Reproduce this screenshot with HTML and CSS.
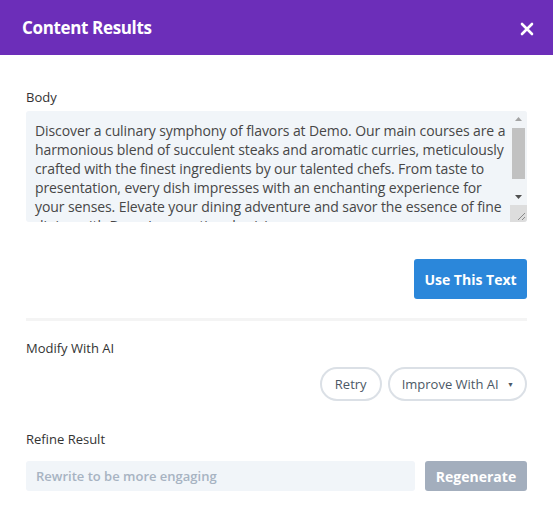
FILE: index.html
```html
<!DOCTYPE html>
<html lang="en">
<head>
  <meta charset="UTF-8">
  <meta name="viewport" content="width=device-width, initial-scale=1.0">
  <title>Content Results</title>
  <link rel="stylesheet" href="styles.css">
</head>
<body>

  <div class="modal">
    <header class="modal-header">
      <h2>Content Results</h2>
      <span class="close">
        <svg width="14" height="14" viewBox="0 0 14 14"><path d="M2 2L12 12M12 2L2 12" stroke="#fff" stroke-width="2.6" stroke-linecap="round"/></svg>
      </span>
    </header>

    <div class="modal-body">
      <!-- Result -->
      <label class="field-label">Body</label>
      <div class="text-wrap">
        <textarea class="result-text">Discover a culinary symphony of flavors at Demo. Our main courses are a harmonious blend of succulent steaks and aromatic curries, meticulously crafted with the finest ingredients by our talented chefs. From taste to presentation, every dish impresses with an enchanting experience for your senses. Elevate your dining adventure and savor the essence of fine dining with Demo's exceptional cuisine.</textarea>
        <!-- scrollbar drawn by hand, headless hides the native one -->
        <div class="scrollbar">
          <div class="sb-btn">
            <svg width="7" height="4" viewBox="0 0 7 4"><path d="M0 4L3.5 0L7 4Z" fill="#a3a3a3"/></svg>
          </div>
          <div class="sb-track"><div class="sb-thumb"></div></div>
          <div class="sb-btn">
            <svg width="7" height="4" viewBox="0 0 7 4"><path d="M0 0L3.5 4L7 0Z" fill="#505050"/></svg>
          </div>
          <div class="sb-corner">
            <svg width="17" height="17" viewBox="0 0 17 17"><path d="M15 8L8 15M15 12L12 15" stroke="#8a8a8a" stroke-width="1"/></svg>
          </div>
        </div>
      </div>

      <div class="actions">
        <button class="btn-primary">Use This Text</button>
      </div>

      <div class="divider"></div>

      <!-- Modify -->
      <label class="field-label modify-label">Modify With AI</label>
      <div class="pill-row">
        <button class="pill pill-retry">Retry</button>
        <button class="pill">Improve With AI <span class="caret">&#9660;</span></button>
      </div>

      <!-- Refine -->
      <label class="field-label refine-label">Refine Result</label>
      <div class="refine-row">
        <input type="text" class="refine-input" placeholder="Rewrite to be more engaging">
        <button class="btn-disabled">Regenerate</button>
      </div>
    </div>
  </div>

</body>
</html>
```

FILE: styles.css
```css
* {
  margin: 0;
  padding: 0;
  box-sizing: border-box;
}

body {
  font-family: "Open Sans", Arial, sans-serif;
  background-color: #fff;
  color: #333;
}

.modal-header {
  height: 55px;
  background-color: #6c2eb9;
  color: white;
  display: flex;
  align-items: center;
  justify-content: space-between;
  padding: 0 19px 0 22px;
}

.modal-header h2 {
  font-size: 17px;
  font-weight: 700;
  letter-spacing: -0.35px;
}

.close {
  display: flex;
  align-items: center;
  margin-top: 2px;
}

.modal-body {
  padding: 33px 26px 20px;
}

.field-label {
  display: block;
  font-size: 13px;
  line-height: 18px;
  color: #333;
}

.text-wrap {
  position: relative;
  margin-top: 5px;
  height: 111px;
  border-radius: 3px;
  overflow: hidden;
}

.result-text {
  display: block;
  width: 100%;
  height: 111px;
  padding: 10px 17px 0 9px;
  border: none;
  background-color: #f1f5f9;
  font-family: "Open Sans", Arial, sans-serif;
  font-size: 14px;
  line-height: 19px;
  letter-spacing: -0.1px;
  color: #474747;
  overflow: hidden;
  resize: none;
  outline: none;
}

.scrollbar {
  position: absolute;
  top: 0;
  right: 0;
  bottom: 0;
  width: 17px;
  display: flex;
  flex-direction: column;
  background: #f1f4f7;
}

.sb-btn {
  height: 16px;
  display: flex;
  align-items: center;
  justify-content: center;
}

.sb-track {
  flex: 1;
  padding: 1px 2px;
}

.sb-thumb {
  height: 51px;
  background: #c1c1c1;
}

.sb-corner {
  height: 17px;
  background: #dddddd;
}

.sb-corner svg {
  display: block;
}

.actions {
  display: flex;
  justify-content: flex-end;
  margin-top: 37px;
}

.btn-primary {
  height: 40px;
  width: 113px;
  background-color: #2b87da;
  color: white;
  border: none;
  border-radius: 3px;
  font-family: "Open Sans", Arial, sans-serif;
  font-size: 14px;
  font-weight: 700;
}

.divider {
  height: 3px;
  background-color: #f4f4f4;
  margin-top: 19px;
}

.modify-label {
  margin-top: 18px;
}

.pill-row {
  display: flex;
  justify-content: flex-end;
  gap: 6px;
  margin-top: 10px;
}

.pill {
  height: 34px;
  padding: 0 11px 0 12px;
  border: 2px solid #dbe0e6;
  border-radius: 17px;
  background: white;
  color: #4c5866;
  font-family: "Open Sans", Arial, sans-serif;
  font-size: 13px;
  font-weight: 400;
}

.pill-retry {
  padding: 0 13px;
}

.pill .caret {
  font-size: 7px;
  margin-left: 5px;
  vertical-align: 2px;
}

.refine-label {
  margin-top: 29px;
}

.refine-row {
  display: flex;
  gap: 10px;
  margin-top: 13px;
}

.refine-input {
  flex: 1;
  height: 30px;
  border: none;
  border-radius: 3px;
  background-color: #f1f5f9;
  padding: 0 10px;
  font-family: "Open Sans", Arial, sans-serif;
  font-size: 13px;
  outline: none;
}

.refine-input::placeholder {
  color: #a7b3c2;
  font-weight: 600;
}

.btn-disabled {
  width: 102px;
  height: 30px;
  border: none;
  border-radius: 3px;
  background-color: #a3aebd;
  color: white;
  font-family: "Open Sans", Arial, sans-serif;
  font-size: 14px;
  font-weight: 700;
}
```
